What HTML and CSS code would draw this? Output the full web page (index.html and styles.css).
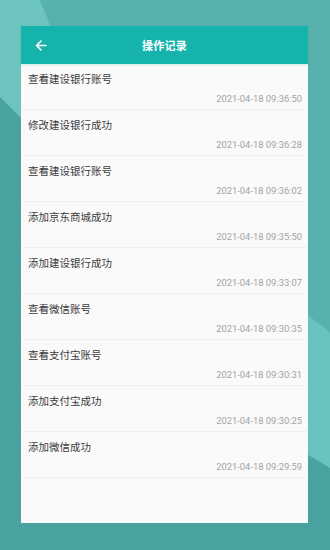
FILE: index.html
```html
<!DOCTYPE html>
<html lang="zh">
<head>
<meta charset="utf-8">
<title>操作记录</title>
<link rel="stylesheet" href="styles.css">
</head>
<body>
<div class="card">
  <div class="header">
    <svg class="back" width="12" height="11" viewBox="0 0 12 11"><path d="M11 5.5H1.5M6 1L1.5 5.5L6 10" fill="none" stroke="#fff" stroke-width="1.6" stroke-linecap="round" stroke-linejoin="round"/></svg>
    <div class="title">操作记录</div>
  </div>
  <div class="list">
    <div class="row"><div class="name">查看建设银行账号</div><div class="time">2021-04-18 09:36:50</div></div>
    <div class="row"><div class="name">修改建设银行成功</div><div class="time">2021-04-18 09:36:28</div></div>
    <div class="row"><div class="name">查看建设银行账号</div><div class="time">2021-04-18 09:36:02</div></div>
    <div class="row"><div class="name">添加京东商城成功</div><div class="time">2021-04-18 09:35:50</div></div>
    <div class="row"><div class="name">添加建设银行成功</div><div class="time">2021-04-18 09:33:07</div></div>
    <div class="row"><div class="name">查看微信账号</div><div class="time">2021-04-18 09:30:35</div></div>
    <div class="row"><div class="name">查看支付宝账号</div><div class="time">2021-04-18 09:30:31</div></div>
    <div class="row"><div class="name">添加支付宝成功</div><div class="time">2021-04-18 09:30:25</div></div>
    <div class="row"><div class="name">添加微信成功</div><div class="time">2021-04-18 09:29:59</div></div>
  </div>
</div>
</body>
</html>
```
FILE: styles.css
```css
html, body {
  margin: 0;
  padding: 0;
}
body {
  width: 330px;
  height: 550px;
  overflow: hidden;
  box-sizing: border-box;
  padding: 26px 22px 0 21px;
  font-family: "Noto Sans CJK SC", "Noto Sans", sans-serif;
  background-color: #49a29e;
  background-image: url("data:image/svg+xml;utf8,<svg xmlns='http://www.w3.org/2000/svg' width='330' height='550' viewBox='0 0 330 550'><rect width='330' height='550' fill='%2349a29e'/><polygon points='40,0 330,0 330,332 308,315 100,150 50,26' fill='%2357b1ac'/><polygon points='0,0 40,0 60,50 21,118 0,97' fill='%236dc4bf'/><polygon points='290,301 330,332 330,468 290,444' fill='%2368c2bd'/></svg>");
  background-repeat: no-repeat;
}
.card {
  height: 497px;
  background: #fafafa;
  display: flex;
  flex-direction: column;
}
.header {
  height: 38px;
  background: #16b3ad;
  display: flex;
  align-items: center;
  position: relative;
  box-shadow: 0 1px 2px rgba(22, 179, 173, 0.25);
}
.back {
  margin-left: 14px;
  width: 12px;
  height: 11px;
}
.title {
  position: absolute;
  left: 0;
  right: 0;
  text-align: center;
  color: #fff;
  font-size: 11px;
  font-weight: 700;
  letter-spacing: 0.2px;
  pointer-events: none;
}
.list {
  display: flex;
  flex-direction: column;
}
.row {
  height: 46px;
  box-sizing: border-box;
  border-bottom: 1px solid #f0f0f0;
  padding: 7px 6px 0 7px;
  display: flex;
  flex-direction: column;
}
.name {
  font-size: 10.5px;
  line-height: 16px;
  color: #3a3a3a;
}
.time {
  margin-top: 5px;
  align-self: flex-end;
  font-family: Roboto, "Noto Sans", sans-serif;
  font-size: 9.4px;
  line-height: 13px;
  color: #a3a3a3;
}
```
